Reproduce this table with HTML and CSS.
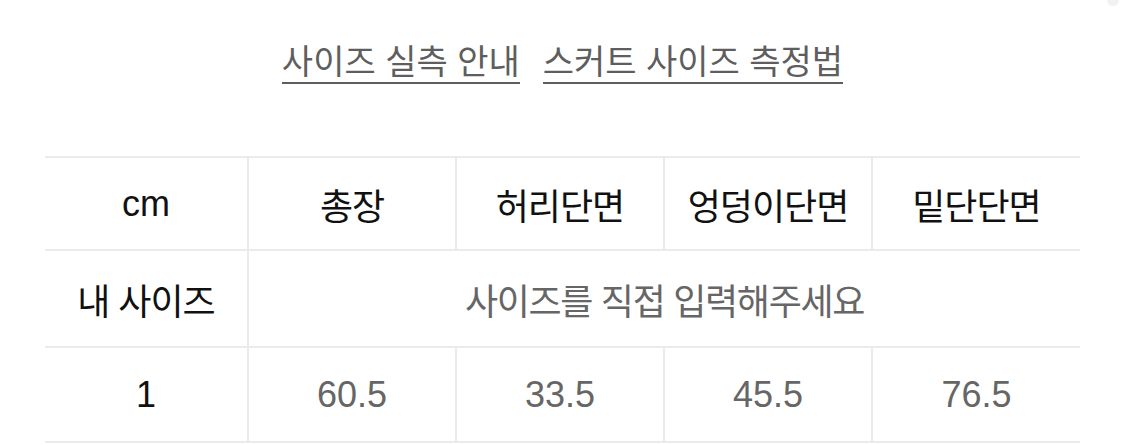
FILE: index.html
```html
<!DOCTYPE html>
<html lang="ko">
<head>
<meta charset="utf-8">
<link rel="stylesheet" href="styles.css">
</head>
<body>
<div class="page">
  <span class="dot"></span>
  <nav class="links">
    <a class="link" href="#">사이즈 실측 안내</a>
    <a class="link" href="#">스커트 사이즈 측정법</a>
  </nav>
  <table class="size">
    <colgroup>
      <col class="c0"><col><col><col><col>
    </colgroup>
    <tr class="r-head">
      <th>cm</th><th class="ko">총장</th><th class="ko">허리단면</th><th class="ko">엉덩이단면</th><th class="ko">밑단단면</th>
    </tr>
    <tr class="r-mine">
      <th class="ko">내 사이즈</th><td class="ko hint" colspan="4">사이즈를 직접 입력해주세요</td>
    </tr>
    <tr class="r-data">
      <th>1</th><td>60.5</td><td>33.5</td><td>45.5</td><td>76.5</td>
    </tr>
  </table>
</div>
</body>
</html>
```
FILE: styles.css
```css
html, body {
  margin: 0;
  padding: 0;
  background: #fff;
}
.page {
  position: relative;
  width: 1125px;
  height: 444px;
  overflow: hidden;
  font-family: "Liberation Sans", "Noto Sans CJK KR", sans-serif;
}
.dot {
  position: absolute;
  right: 6px;
  top: -6px;
  width: 12px;
  height: 12px;
  border-radius: 50%;
  background: #f2f2f2;
}
.links {
  display: flex;
  justify-content: center;
  gap: 23px;
  padding-top: 42px;
  height: 156px;
  box-sizing: border-box;
}
.link {
  color: #5e5e5e;
  font-size: 34px;
  line-height: 40px;
  height: 42px;
  text-decoration: none;
  border-bottom: 2px solid #5e5e5e;
  box-sizing: border-box;
}
.size {
  margin: 0 45px;
  width: 1035px;
  border-collapse: collapse;
  table-layout: fixed;
}
.c0 { width: 203px; }
.size th, .size td {
  border: 2px solid #ebebeb;
  text-align: center;
  padding: 0;
  font-size: 36px;
  font-weight: 400;
}
.size .ko { letter-spacing: -1px; }
.size .hint { letter-spacing: -1.3px; }
.r-head > * { height: 91px; }
.r-mine > * { height: 95px; }
.r-data > * { height: 93px; }
.size tr > :first-child { border-left: none; }
.size tr > :last-child { border-right: none; }
.size th { color: #111; }
.size td { color: #666; }
```
